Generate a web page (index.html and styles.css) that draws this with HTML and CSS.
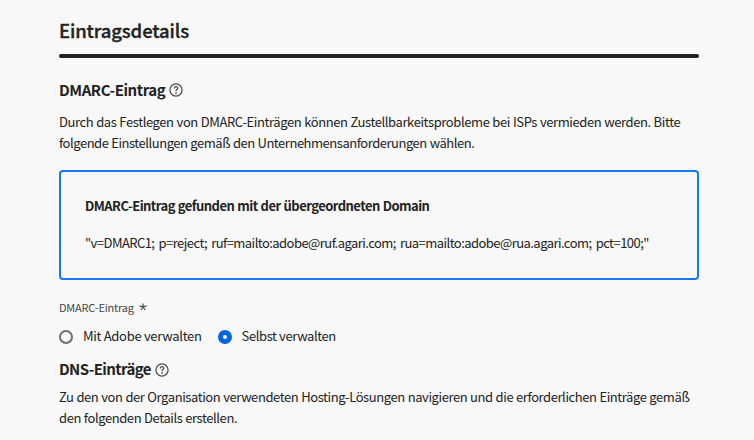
FILE: index.html
```html
<!DOCTYPE html>
<html lang="de">
<head>
<meta charset="utf-8">
<title>Eintragsdetails</title>
<link rel="stylesheet" href="styles.css">
</head>
<body>
<main class="details">
  <h1 class="title">Eintragsdetails</h1>
  <div class="rule"></div>
  <h2 class="heading dmarc"><span>DMARC-Eintrag</span>
    <svg class="help" viewBox="0 0 14 14"><circle cx="7" cy="7" r="6.1"/><path d="M5.3 5.4C5.3 3.2 8.7 3.2 8.7 5.2C8.7 6.5 7 6.6 7 8.2"/><circle class="dot" cx="7" cy="10.1" r=".9"/></svg></h2>
  <p class="copy"><span>Durch das Festlegen von DMARC-Einträgen können Zustellbarkeitsprobleme bei ISPs vermieden werden. Bitte</span><br><span class="tight">folgende Einstellungen gemäß den Unternehmensanforderungen wählen.</span></p>
  <section class="notice">
    <h3 class="notice-title">DMARC-Eintrag gefunden mit der übergeordneten Domain</h3>
    <p class="record">"v=DMARC1; p=reject; ruf=mailto:adobe@ruf.agari.com; rua=mailto:adobe@rua.agari.com; pct=100;"</p>
  </section>
  <div class="label"><span>DMARC-Eintrag</span>
    <svg class="star" viewBox="0 0 8 8"><path d="M4 4V.4M4 4L7.5 2.9M4 4L6.2 7M4 4L1.8 7M4 4L.5 2.9"/></svg></div>
  <div class="options">
    <label class="option"><i class="radio"></i><span class="managed">Mit Adobe verwalten</span></label>
    <label class="option"><i class="radio selected"></i><span>Selbst verwalten</span></label>
  </div>
  <h2 class="heading dns"><span>DNS-Einträge</span>
    <svg class="help" viewBox="0 0 14 14"><circle cx="7" cy="7" r="6.1"/><path d="M5.3 5.4C5.3 3.2 8.7 3.2 8.7 5.2C8.7 6.5 7 6.6 7 8.2"/><circle class="dot" cx="7" cy="10.1" r=".9"/></svg></h2>
  <p class="copy hosting">Zu den von der Organisation verwendeten Hosting-Lösungen navigieren und die erforderlichen Einträge gemäß<br>den folgenden Details erstellen.</p>
</main>
</body>
</html>
```
FILE: styles.css
```css
* { box-sizing: border-box; }
body { margin: 0; background: #f8f8f8; color: #222; font: 13px/21px "Noto Sans CJK SC", sans-serif; overflow: hidden; white-space: nowrap; }
h1, h2, h3, p { margin: 0; }
.details { width: 640px; margin-left: 59px; padding-top: 15px; }
.title { height: 39px; font-size: 18.5px; line-height: 30px; font-weight: 500; letter-spacing: -.12px; -webkit-text-stroke: .35px #222; }
.rule { height: 4px; background: #222; border-radius: 2px; }
.heading { display: flex; align-items: center; gap: 4px; height: 24px; font-size: 15px; font-weight: 700; letter-spacing: -.42px; }
.heading span { padding-bottom: 2px; }
.dmarc { margin-top: 20px; }
.help { width: 14px; height: 14px; fill: none; stroke: #505050; stroke-width: 1.3; }
.help .dot { fill: #505050; stroke: none; }
.copy { margin-top: 9px; letter-spacing: -.4px; word-spacing: .4px; }
.tight { letter-spacing: -.47px; }
.notice { height: 110px; margin-top: 17px; padding: 23px 24px; border: 2px solid #147af3; border-radius: 4px; }
.notice-title { font-size: 13px; line-height: 21px; font-weight: 700; letter-spacing: -.54px; word-spacing: .6px; }
.record { margin-top: 16px; letter-spacing: -.55px; word-spacing: 1.8px; }
.label { display: flex; align-items: center; gap: 5px; height: 16px; margin-top: 19px; font-size: 11px; letter-spacing: -.2px; color: #464646; }
.star { width: 8px; height: 8px; stroke: #464646; stroke-width: 1.2; }
.options { display: flex; gap: 16px; height: 22px; margin-top: 11px; letter-spacing: -.4px; }
.option { display: flex; align-items: center; gap: 10px; }
.option span { padding-bottom: 3px; }
.managed { letter-spacing: -.3px; }
.radio { width: 14px; height: 14px; border: 2px solid #6e6e6e; border-radius: 50%; background: #fcfcfc; }
.selected { border: 5px solid #0265dc; }
.dns { margin-top: 10px; height: 23px; letter-spacing: -.6px; }
.hosting { margin-top: 5px; letter-spacing: -.42px; word-spacing: .4px; }
```
